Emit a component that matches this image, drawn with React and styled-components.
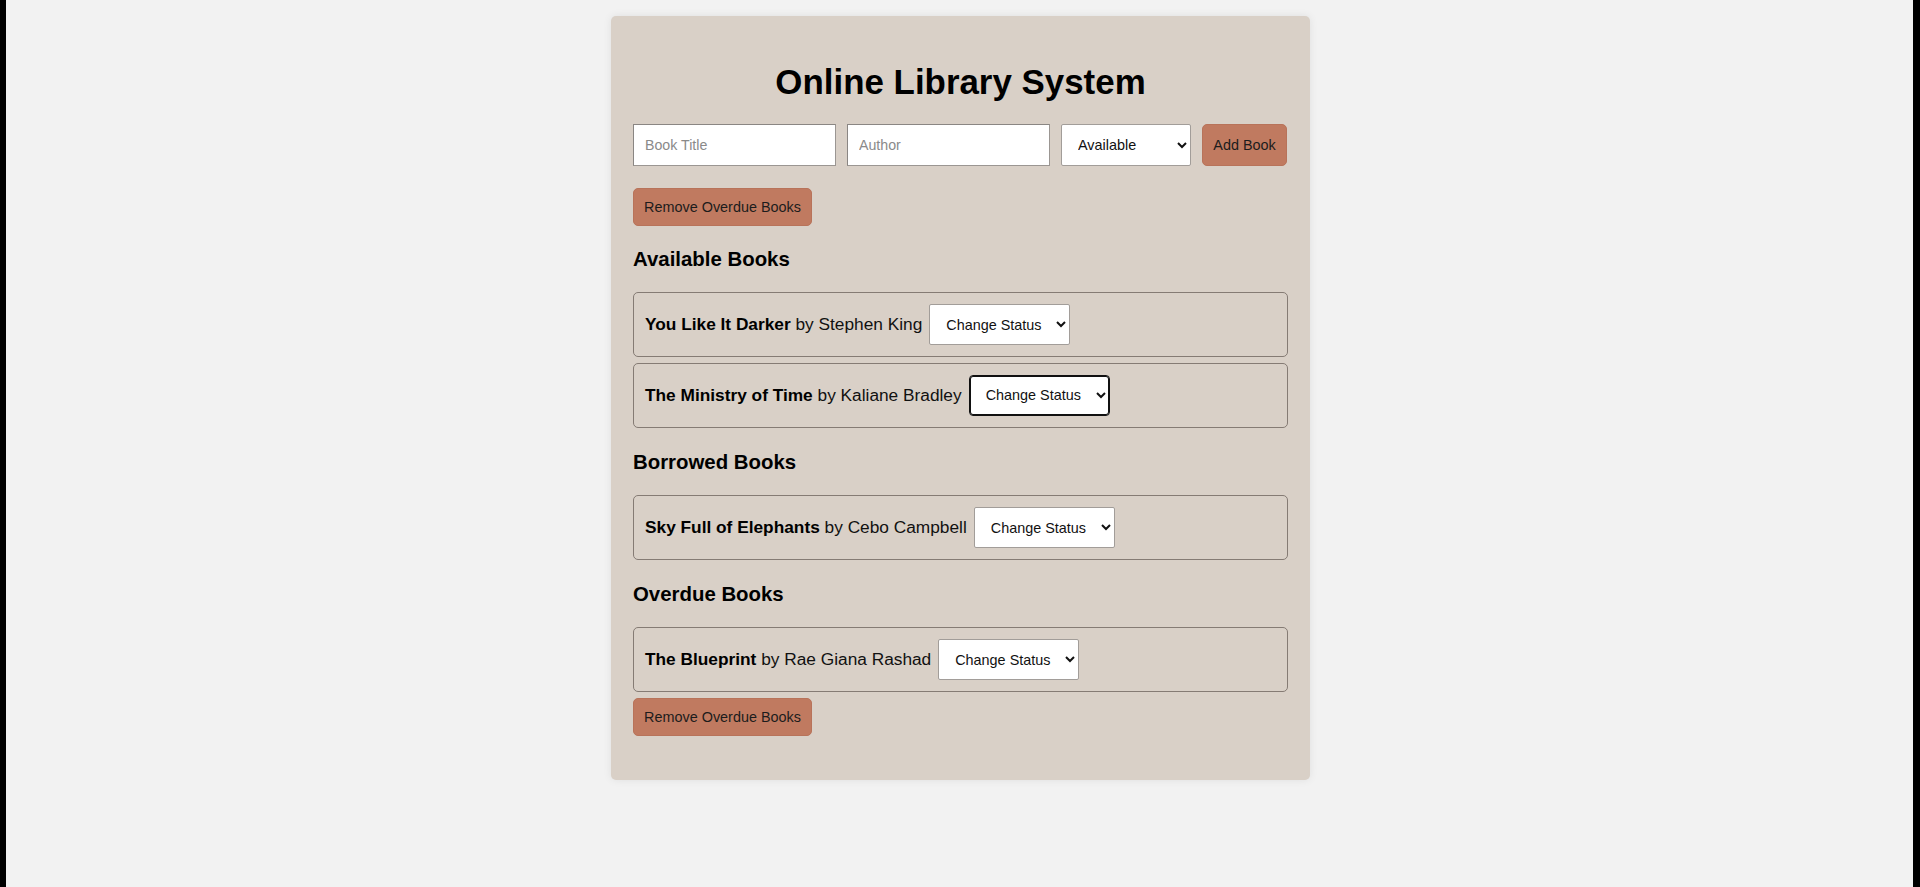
import React from "react";
import styled, { createGlobalStyle } from "styled-components";

const books = {
  available: [
    { title: "You Like It Darker", author: "Stephen King" },
    { title: "The Ministry of Time", author: "Kaliane Bradley", focused: true },
  ],
  borrowed: [{ title: "Sky Full of Elephants", author: "Cebo Campbell" }],
  overdue: [{ title: "The Blueprint", author: "Rae Giana Rashad" }],
};

const GlobalStyle = createGlobalStyle`
  * {
    box-sizing: border-box;
  }
  body {
    margin: 0;
    background: #f2f2f2;
    font-family: "Liberation Sans", Arial, sans-serif;
    color: #111;
  }
`;

const BookRow = ({ book }) => (
  <Item>
    <ItemText>
      <strong>{book.title}</strong> by {book.author}
    </ItemText>
    <StatusSelect $focused={book.focused} defaultValue="">
      <option value="">Change Status</option>
      <option value="available">Available</option>
      <option value="borrowed">Borrowed</option>
      <option value="overdue">Overdue</option>
    </StatusSelect>
  </Item>
);

const App = () => {
  return (
    <Screen>
      <GlobalStyle />
      <Card>
        <Title>Online Library System</Title>
        <FormRow>
          <TextInput type="text" placeholder="Book Title" />
          <TextInput type="text" placeholder="Author" />
          <FormSelect defaultValue="available">
            <option value="available">Available</option>
            <option value="borrowed">Borrowed</option>
            <option value="overdue">Overdue</option>
          </FormSelect>
          <AddButton>Add Book</AddButton>
        </FormRow>

        <RemoveButton $top={22}>Remove Overdue Books</RemoveButton>

        <SectionTitle $top={21}>Available Books</SectionTitle>
        <List>
          {books.available.map((b) => (
            <BookRow key={b.title} book={b} />
          ))}
        </List>

        <SectionTitle $top={22.5}>Borrowed Books</SectionTitle>
        <List>
          {books.borrowed.map((b) => (
            <BookRow key={b.title} book={b} />
          ))}
        </List>

        <SectionTitle $top={22}>Overdue Books</SectionTitle>
        <List>
          {books.overdue.map((b) => (
            <BookRow key={b.title} book={b} />
          ))}
        </List>

        <RemoveButton $top={6}>Remove Overdue Books</RemoveButton>
      </Card>
    </Screen>
  );
};

const Screen = styled.div`
  min-height: 100vh;
  display: flex;
  justify-content: center;
  align-items: flex-start;
  padding: 16px 0 0 2px;
  border-left: 6px solid #000;
  border-right: 7px solid #000;
`;

const Card = styled.div`
  width: 699px;
  background: #d9d0c7;
  border-radius: 5px;
  box-shadow: 0 0 8px rgba(0, 0, 0, 0.08);
  padding: 22px 22px 44px;
`;

const Title = styled.h1`
  margin: 24px 0 22px;
  font-size: 34.9px;
  line-height: 40px;
  font-weight: bold;
  text-align: center;
  color: #000;
`;

const FormRow = styled.div`
  display: flex;
  gap: 11px;
  height: 42px;
`;

const TextInput = styled.input`
  width: 203px;
  height: 42px;
  padding: 0 11px;
  border: 1px solid #9b9692;
  border-top-color: #8a8683;
  border-left-color: #8a8683;
  background: #fff;
  font-family: inherit;
  font-size: 14.2px;
  color: #111;

  &::placeholder {
    color: #8a8a8a;
  }
`;

const BaseSelect = styled.select`
  height: 41px;
  padding: 0 8px 0 12px;
  border: 1px solid #a29d99;
  border-radius: 2px;
  background: #fff;
  font-family: inherit;
  font-size: 14.4px;
  color: #111;
`;

const FormSelect = styled(BaseSelect)`
  width: 130px;
  height: 42px;
`;

const StatusSelect = styled(BaseSelect)`
  width: 141px;
  flex-shrink: 0;
  ${(p) =>
    p.$focused &&
    `
    border-color: #111;
    border-radius: 4px;
    box-shadow: inset 0 0 0 1px #111;
  `}
`;

const Button = styled.button`
  background: #c07a60;
  border: 1px solid #b8735a;
  border-radius: 5px;
  color: #1c1c1c;
  font-family: inherit;
  font-size: 14.4px;
  cursor: pointer;
`;

const AddButton = styled(Button)`
  width: 85px;
  padding: 0;
`;

const RemoveButton = styled(Button)`
  display: block;
  width: 179px;
  height: 38px;
  padding: 0;
  margin-top: ${(p) => p.$top}px;
`;

const SectionTitle = styled.h3`
  margin: ${(p) => p.$top}px 0 21px;
  font-size: 20.4px;
  line-height: 24px;
  font-weight: bold;
  color: #000;
`;

const List = styled.div`
  display: flex;
  flex-direction: column;
  gap: 5.5px;
`;

const Item = styled.div`
  display: flex;
  align-items: center;
  gap: 7px;
  height: 65px;
  padding: 0 11px;
  border: 1.5px solid #857b74;
  border-radius: 5px;
`;

const ItemText = styled.span`
  font-size: 17.3px;
  color: #111;
  white-space: nowrap;

  strong {
    color: #000;
  }
`;

export default App;
